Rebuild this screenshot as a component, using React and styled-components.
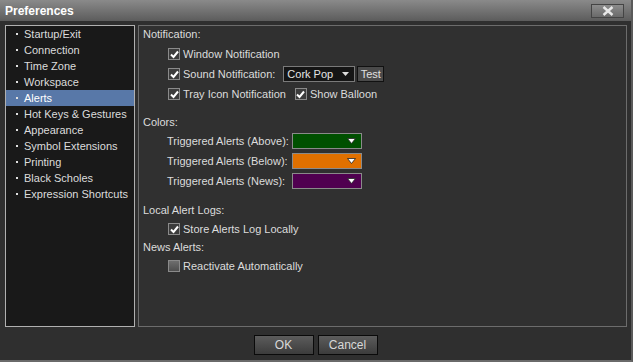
import React from "react";
import styled, { createGlobalStyle } from "styled-components";

const GlobalStyle = createGlobalStyle`
  html, body {
    margin: 0;
    padding: 0;
    background: #2f2f2f;
  }
  body {
    font-family: "Liberation Sans", Arial, sans-serif;
    font-size: 11px;
  }
`;

const sections = [
  "Startup/Exit",
  "Connection",
  "Time Zone",
  "Workspace",
  "Alerts",
  "Hot Keys & Gestures",
  "Appearance",
  "Symbol Extensions",
  "Printing",
  "Black Scholes",
  "Expression Shortcuts",
];

function Check({ checked }) {
  return (
    <Box checked={checked}>
      {checked && (
        <svg width="9" height="9" viewBox="0 0 9 9">
          <path d="M1 4.5 L3.5 7 L8 1.5" fill="none" stroke="#fff" strokeWidth="2" />
        </svg>
      )}
    </Box>
  );
}

function CheckItem({ checked, children }) {
  return (
    <CheckLabel>
      <Check checked={checked} />
      <span>{children}</span>
    </CheckLabel>
  );
}

function Arrow() {
  return (
    <svg width="9" height="6" viewBox="0 0 9 6">
      <path d="M0.5 0.5 L8.5 0.5 L4.5 5.5 Z" fill="#fff" stroke="#222" strokeWidth="0.8" />
    </svg>
  );
}

export default function App() {
  return (
    <Window>
      <GlobalStyle />
      <TitleBar>
        <Title>Preferences</Title>
        <CloseButton>
          <svg width="12" height="10" viewBox="0 0 12 10">
            <path d="M1.5 1 L10.5 9 M10.5 1 L1.5 9" stroke="#e8e8e8" strokeWidth="2.4" />
          </svg>
        </CloseButton>
      </TitleBar>
      <Body>
        <NavList>
          {sections.map((s) => (
            <NavItem key={s} active={s === "Alerts"}>
              <Bullet />
              {s}
            </NavItem>
          ))}
        </NavList>
        <Panel>
          <Heading>Notification:</Heading>
          <Row>
            <CheckItem checked>Window Notification</CheckItem>
          </Row>
          <Row>
            <CheckItem checked>Sound Notification:</CheckItem>
            <Select>
              <span>Cork Pop</span>
              <svg width="7" height="4" viewBox="0 0 7 4">
                <path d="M0 0 L7 0 L3.5 4 Z" fill="#ddd" />
              </svg>
            </Select>
            <SmallButton>Test</SmallButton>
          </Row>
          <Row>
            <CheckItem checked>Tray Icon Notification</CheckItem>
            <CheckItem checked>Show Balloon</CheckItem>
          </Row>

          <Heading gap={10}>Colors:</Heading>
          <ColorGrid>
            <span>Triggered Alerts (Above):</span>
            <Swatch color="#005000"><Arrow /></Swatch>
            <span>Triggered Alerts (Below):</span>
            <Swatch color="#e07000"><Arrow /></Swatch>
            <span>Triggered Alerts (News):</span>
            <Swatch color="#500050"><Arrow /></Swatch>
          </ColorGrid>

          <Heading gap={11}>Local Alert Logs:</Heading>
          <Row tight>
            <CheckItem checked>Store Alerts Log Locally</CheckItem>
          </Row>
          <Heading gap={1}>News Alerts:</Heading>
          <Row tight>
            <CheckItem>Reactivate Automatically</CheckItem>
          </Row>
        </Panel>
      </Body>
      <Footer>
        <DialogButton>OK</DialogButton>
        <DialogButton>Cancel</DialogButton>
      </Footer>
    </Window>
  );
}

const Window = styled.div`
  width: 633px;
  height: 362px;
  box-sizing: border-box;
  background: #2f2f2f;
  border-right: 2px solid #5a5a5a;
  border-bottom: 2px solid #6a6a6a;
  display: flex;
  flex-direction: column;
  overflow: hidden;
`;

const TitleBar = styled.div`
  height: 21px;
  flex: none;
  display: flex;
  align-items: center;
  justify-content: space-between;
  padding: 0 7px 0 5px;
  background: linear-gradient(#8a8a8a, #5c5c5c);
`;

const Title = styled.div`
  color: #fff;
  font-weight: bold;
  font-size: 12px;
`;

const CloseButton = styled.div`
  width: 33px;
  height: 14px;
  box-sizing: border-box;
  border: 1px solid #444;
  background: linear-gradient(#8c8c8c, #6a6a6a);
  display: flex;
  align-items: center;
  justify-content: center;
`;

const Body = styled.div`
  display: flex;
  gap: 3px;
  padding: 4px 4px 0 5px;
  height: 302px;
  flex: none;
`;

const NavList = styled.div`
  width: 130px;
  box-sizing: border-box;
  border: 1px solid #b0b0b0;
  background: #191919;
  display: flex;
  flex-direction: column;
`;

const NavItem = styled.div`
  height: 16px;
  flex: none;
  display: flex;
  align-items: center;
  padding-left: 10px;
  color: ${(p) => (p.active ? "#ffffff" : "#dcdcdc")};
  background: ${(p) => (p.active ? "#5878a8" : "transparent")};
  white-space: nowrap;
`;

const Bullet = styled.span`
  width: 2px;
  height: 2px;
  background: #e0e0e0;
  margin-right: 6px;
`;

const Panel = styled.div`
  flex: 1;
  box-sizing: border-box;
  border: 1px solid #6c6c6c;
  background: #303030;
  padding: 0 0 0 4px;
  display: flex;
  flex-direction: column;
  color: #dcdcdc;
`;

const Heading = styled.div`
  height: 18px;
  flex: none;
  line-height: 16px;
  margin-top: ${(p) => p.gap || 0}px;
`;

const Row = styled.div`
  height: ${(p) => (p.tight ? 18 : 20)}px;
  flex: none;
  display: flex;
  align-items: center;
  gap: 6px;
  padding-left: 25px;
`;

const CheckLabel = styled.label`
  display: flex;
  align-items: center;
  gap: 3px;
  margin-right: 3px;
`;

const Box = styled.span`
  width: 12px;
  height: 12px;
  box-sizing: border-box;
  border: 1px solid #8a8a8a;
  background: ${(p) => (p.checked ? "#3c3c3c" : "linear-gradient(#6e6e6e, #4e4e4e)")};
  display: flex;
  align-items: center;
  justify-content: center;
`;

const Select = styled.div`
  width: 72px;
  height: 16px;
  box-sizing: border-box;
  border: 1px solid #7a7a7a;
  background: #151515;
  display: flex;
  align-items: center;
  justify-content: space-between;
  padding: 0 5px 0 3px;
  color: #e4e4e4;
  margin-left: -1px;
`;

const SmallButton = styled.div`
  width: 27px;
  height: 16px;
  box-sizing: border-box;
  border: 1px solid #111;
  background: #4a4a4a;
  display: flex;
  align-items: center;
  justify-content: center;
  margin-left: -4px;
  color: #e0e0e0;
`;

const ColorGrid = styled.div`
  display: grid;
  grid-template-columns: 125px 70px;
  grid-auto-rows: 20px;
  align-items: center;
  padding-left: 24px;
  margin-top: -1px;
  flex: none;
`;

const Swatch = styled.div`
  height: 16px;
  box-sizing: border-box;
  border: 1px solid #8a8a8a;
  background: ${(p) => p.color};
  display: flex;
  align-items: center;
  justify-content: flex-end;
  padding-right: 5px;
`;

const Footer = styled.div`
  flex: 1;
  display: flex;
  justify-content: center;
  align-items: flex-start;
  gap: 4px;
  padding-top: 8px;
`;

const DialogButton = styled.div`
  width: 60px;
  height: 20px;
  box-sizing: border-box;
  border: 1px solid #0a0a0a;
  background: linear-gradient(#5c5c5c, #3c3c3c);
  color: #d8d8d8;
  font-size: 12px;
  display: flex;
  align-items: center;
  justify-content: center;
`;
